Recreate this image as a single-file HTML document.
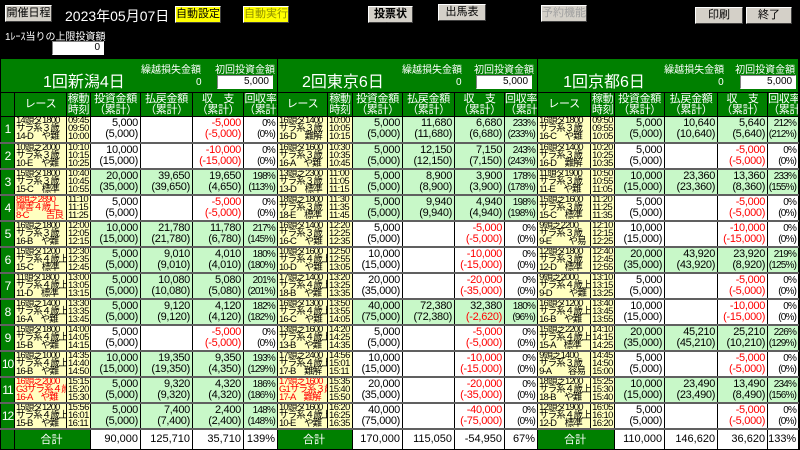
<!DOCTYPE html>
<html><head><meta charset="utf-8">
<style>
*{box-sizing:border-box;margin:0;padding:0}
body{width:800px;height:449px;background:#000;overflow:hidden;position:relative;font-family:"Liberation Sans","Noto Sans CJK JP",sans-serif;color:#000}
.btn{position:absolute;background:#d4d0c8;border:1px solid;border-color:#fff #404040 #404040 #fff;box-shadow:1px 1px 0 #000;font-size:11px;text-align:center;line-height:15px;height:17px}
.yb{background:#ffff00}
.dis{color:#a0a0a0}
.wt{position:absolute;color:#fff}
.inp{position:absolute;background:#fff;border:1px solid;border-color:#808080 #fff #fff #808080;font-size:10px;text-align:right;padding-right:3px;line-height:12px}
table{position:absolute;left:0;top:58px;border-collapse:collapse;table-layout:fixed;width:798px}
td{border:1px solid #000;padding:0;overflow:hidden;white-space:nowrap;vertical-align:middle}
tr.d td{border-bottom:2px solid #606060;height:26px}
.ch td{background:#008000;color:#fff;font-size:11px;text-align:center;line-height:11px;height:24px;border-color:#000;letter-spacing:-0.3px}
.num{background:#008000;color:#fff;text-align:center;font-size:12px;letter-spacing:-1px}
.r{background:#ffffc0;font-size:9.5px;line-height:8px;padding-left:1px;letter-spacing:-0.9px}
.t{background:#ffffc0;font-size:9.5px;line-height:8px;padding-left:1px;letter-spacing:-0.6px}
.n{background:#fff;font-size:11px;line-height:11px;text-align:right;padding-right:2px;letter-spacing:-0.3px}
tr.d td:nth-child(7),tr.d td:nth-child(13),tr.d td:nth-child(19){font-size:10px;letter-spacing:-0.8px}
.g{background:#c8f8c8}
.red{color:#ff0000}
.rr{color:#ff0000}
.tot td{height:21px;font-size:11px;text-align:right;background:#fff;padding-right:2px}
.tot td.gt{background:#008000;color:#fff;text-align:center}
.hd td{background:#008000;color:#fff;height:34px}
.sh{position:relative;height:33px}
.sh .ttl{position:absolute;top:9px;font-size:16px}
.sh .l1{position:absolute;top:2px;font-size:10px}
.sh .z{position:absolute;top:18px;font-size:10px}
.sh .box{position:absolute;top:16px;width:56px;height:14px;background:#fff;border:1px solid;border-color:#808080 #fff #fff #808080;color:#000;font-size:10px;text-align:right;padding-right:3px;line-height:12px}
</style></head><body>
<div class="btn" style="left:5px;top:5px;width:47px">開催日程</div>
<div class="wt" style="left:65px;top:6px;font-size:14px">2023年05月07日</div>
<div class="btn yb" style="left:175px;top:6px;width:46px">自動設定</div>
<div class="btn yb" style="left:243px;top:6px;width:46px;color:#909000">自動実行</div>
<div class="btn" style="left:368px;top:6px;width:45px;font-weight:bold">投票状況</div>
<div class="btn" style="left:438px;top:4px;width:48px">出馬表</div>
<div class="btn dis" style="left:541px;top:5px;width:46px">予約機能</div>
<div class="btn" style="left:695px;top:7px;width:48px">印刷</div>
<div class="btn" style="left:746px;top:7px;width:46px">終了</div>
<div class="wt" style="left:5px;top:28px;font-size:10px">1ﾚｰｽ当りの上限投資額</div>
<div class="inp" style="left:52px;top:41px;width:52px;height:14px">0</div>

<table>
<colgroup>
<col style="width:14px">
<col style="width:52px"><col style="width:24px"><col style="width:50px"><col style="width:52px"><col style="width:51px"><col style="width:34px">
<col style="width:50px"><col style="width:25px"><col style="width:50px"><col style="width:52px"><col style="width:50px"><col style="width:33px">
<col style="width:53px"><col style="width:24px"><col style="width:50px"><col style="width:53px"><col style="width:50px"><col style="width:31px">
</colgroup>
<tr class="hd">
<td colspan="7"><div class="sh"><span class="ttl" style="left:42px">1回新潟4日</span><span class="l1" style="left:140px">繰越損失金額</span><span class="l1" style="left:214px">初回投資金額</span><span class="z" style="left:195px">0</span><span class="box" style="left:216px">5,000</span></div></td>
<td colspan="6"><div class="sh"><span class="ttl" style="left:24px">2回東京6日</span><span class="l1" style="left:124px">繰越損失金額</span><span class="l1" style="left:196px">初回投資金額</span><span class="z" style="left:178px">0</span><span class="box" style="left:198px">5,000</span></div></td>
<td colspan="6"><div class="sh"><span class="ttl" style="left:25px">1回京都6日</span><span class="l1" style="left:126px">繰越損失金額</span><span class="l1" style="left:197px">初回投資金額</span><span class="z" style="left:180px">0</span><span class="box" style="left:202px">5,000</span></div></td>
</tr>
<tr class="ch">
<td></td><td>レース</td><td>稼動<br>時刻</td><td>投資金額<br>（累計）</td><td>払戻金額<br>（累計）</td><td>収　支<br>（累計）</td><td>回収率<br>（累計）</td>
<td>レース</td><td>稼動<br>時刻</td><td>投資金額<br>（累計）</td><td>払戻金額<br>（累計）</td><td>収　支<br>（累計）</td><td>回収率<br>（累計）</td>
<td>レース</td><td>稼動<br>時刻</td><td>投資金額<br>（累計）</td><td>払戻金額<br>（累計）</td><td>収　支<br>（累計）</td><td>回収率<br>（累計）</td>
</tr>

<tr class="d"><td class="num">1</td>
<td class="r">14頭ダ1800<br>サラ系３歳<br>14-D　や難</td><td class="t">09:45<br>09:50<br>10:00</td><td class="n">5,000<br>(5,000)</td><td class="n"></td><td class="n red">-5,000<br>(-5,000)</td><td class="n">0%<br>(0%)</td>
<td class="r">16頭ダ1400<br>サラ系３歳<br>16-D　難解</td><td class="t">10:00<br>10:05<br>10:15</td><td class="n g">5,000<br>(5,000)</td><td class="n g">11,680<br>(11,680)</td><td class="n g">6,680<br>(6,680)</td><td class="n g">233%<br>(233%)</td>
<td class="r">16頭ダ1800<br>サラ系３歳<br>16-C　や難</td><td class="t">09:50<br>09:55<br>10:05</td><td class="n g">5,000<br>(5,000)</td><td class="n g">10,640<br>(10,640)</td><td class="n g">5,640<br>(5,640)</td><td class="n g">212%<br>(212%)</td></tr>

<tr class="d"><td class="num">2</td>
<td class="r">10頭芝2000<br>サラ系３歳<br>10-E　や難</td><td class="t">10:10<br>10:15<br>10:25</td><td class="n">10,000<br>(15,000)</td><td class="n"></td><td class="n red">-10,000<br>(-15,000)</td><td class="n">0%<br>(0%)</td>
<td class="r">16頭ダ1600<br>サラ系３歳<br>16-A　や難</td><td class="t">10:30<br>10:35<br>10:45</td><td class="n g">5,000<br>(5,000)</td><td class="n g">12,150<br>(12,150)</td><td class="n g">7,150<br>(7,150)</td><td class="n g">243%<br>(243%)</td>
<td class="r">16頭ダ1400<br>サラ系３歳<br>16-D　難解</td><td class="t">10:20<br>10:25<br>10:35</td><td class="n">5,000<br>(5,000)</td><td class="n"></td><td class="n red">-5,000<br>(-5,000)</td><td class="n">0%<br>(0%)</td></tr>

<tr class="d"><td class="num">3</td>
<td class="r">15頭ダ1800<br>サラ系３歳<br>15-C　標準</td><td class="t">10:40<br>10:45<br>10:55</td><td class="n g">20,000<br>(35,000)</td><td class="n g">39,650<br>(39,650)</td><td class="n g">19,650<br>(4,650)</td><td class="n g">198%<br>(113%)</td>
<td class="r">13頭芝2300<br>サラ系３歳<br>13-D　標準</td><td class="t">11:00<br>11:05<br>11:15</td><td class="n g">5,000<br>(5,000)</td><td class="n g">8,900<br>(8,900)</td><td class="n g">3,900<br>(3,900)</td><td class="n g">178%<br>(178%)</td>
<td class="r">11頭ダ1900<br>サラ系３歳<br>11-E　や難</td><td class="t">10:50<br>10:55<br>11:05</td><td class="n g">10,000<br>(15,000)</td><td class="n g">23,360<br>(23,360)</td><td class="n g">13,360<br>(8,360)</td><td class="n g">233%<br>(155%)</td></tr>

<tr class="d"><td class="num">4</td>
<td class="r rr">8頭芝2890<br>障害４歳上<br>8-C　　吉良</td><td class="t">11:10<br>11:15<br>11:25</td><td class="n">5,000<br>(5,000)</td><td class="n"></td><td class="n red">-5,000<br>(-5,000)</td><td class="n">0%<br>(0%)</td>
<td class="r">18頭芝1800<br>サラ系３歳<br>18-E　標準</td><td class="t">11:30<br>11:35<br>11:45</td><td class="n g">5,000<br>(5,000)</td><td class="n g">9,940<br>(9,940)</td><td class="n g">4,940<br>(4,940)</td><td class="n g">198%<br>(198%)</td>
<td class="r">15頭芝1600<br>サラ系３歳<br>15-C　標準</td><td class="t">11:20<br>11:25<br>11:35</td><td class="n">5,000<br>(5,000)</td><td class="n"></td><td class="n red">-5,000<br>(-5,000)</td><td class="n">0%<br>(0%)</td></tr>

<tr class="d"><td class="num">5</td>
<td class="r">16頭芝1800<br>サラ系３歳<br>16-B　や難</td><td class="t">12:00<br>12:05<br>12:15</td><td class="n g">10,000<br>(15,000)</td><td class="n g">21,780<br>(21,780)</td><td class="n g">11,780<br>(6,780)</td><td class="n g">217%<br>(145%)</td>
<td class="r">16頭ダ1400<br>サラ系３歳<br>16-C　や難</td><td class="t">12:20<br>12:25<br>12:35</td><td class="n">5,000<br>(5,000)</td><td class="n"></td><td class="n red">-5,000<br>(-5,000)</td><td class="n">0%<br>(0%)</td>
<td class="r">9頭芝2200<br>サラ系３歳<br>9-E　　や易</td><td class="t">12:10<br>12:15<br>12:25</td><td class="n">10,000<br>(15,000)</td><td class="n"></td><td class="n red">-10,000<br>(-15,000)</td><td class="n">0%<br>(0%)</td></tr>

<tr class="d"><td class="num">6</td>
<td class="r">15頭ダ1200<br>サラ系４歳上<br>15-C　標準</td><td class="t">12:30<br>12:35<br>12:45</td><td class="n g">5,000<br>(5,000)</td><td class="n g">9,010<br>(9,010)</td><td class="n g">4,010<br>(4,010)</td><td class="n g">180%<br>(180%)</td>
<td class="r">10頭ダ1600<br>サラ系４歳上<br>10-D　や難</td><td class="t">12:50<br>12:55<br>13:05</td><td class="n">10,000<br>(15,000)</td><td class="n"></td><td class="n red">-10,000<br>(-15,000)</td><td class="n">0%<br>(0%)</td>
<td class="r">12頭ダ1800<br>サラ系３歳<br>12-D　標準</td><td class="t">12:40<br>12:45<br>12:55</td><td class="n g">20,000<br>(35,000)</td><td class="n g">43,920<br>(43,920)</td><td class="n g">23,920<br>(8,920)</td><td class="n g">219%<br>(125%)</td></tr>

<tr class="d"><td class="num">7</td>
<td class="r">11頭ダ1800<br>サラ系４歳上<br>11-D　標準</td><td class="t">13:00<br>13:05<br>13:15</td><td class="n g">5,000<br>(5,000)</td><td class="n g">10,080<br>(10,080)</td><td class="n g">5,080<br>(5,080)</td><td class="n g">201%<br>(201%)</td>
<td class="r">17頭芝1400<br>サラ系４歳上<br>18-B　や難</td><td class="t">13:20<br>13:25<br>13:35</td><td class="n">20,000<br>(35,000)</td><td class="n"></td><td class="n red">-20,000<br>(-35,000)</td><td class="n">0%<br>(0%)</td>
<td class="r">9頭芝2000<br>サラ系４歳上<br>9-D　　や難</td><td class="t">13:10<br>13:15<br>13:25</td><td class="n">5,000<br>(5,000)</td><td class="n"></td><td class="n red">-5,000<br>(-5,000)</td><td class="n">0%<br>(0%)</td></tr>

<tr class="d"><td class="num">8</td>
<td class="r">16頭芝1400<br>サラ系４歳上<br>16-A　や難</td><td class="t">13:30<br>13:35<br>13:45</td><td class="n g">5,000<br>(5,000)</td><td class="n g">9,120<br>(9,120)</td><td class="n g">4,120<br>(4,120)</td><td class="n g">182%<br>(182%)</td>
<td class="r">16頭ダ1300<br>サラ系４歳上<br>16-C　や難</td><td class="t">13:50<br>13:55<br>14:05</td><td class="n g">40,000<br>(75,000)</td><td class="n g">72,380<br>(72,380)</td><td class="n g">32,380<br><span class="red">(-2,620)</span></td><td class="n g">180%<br>(96%)</td>
<td class="r">16頭ダ1200<br>サラ系４歳上<br>16-B　や難</td><td class="t">13:40<br>13:45<br>13:55</td><td class="n">10,000<br>(15,000)</td><td class="n"></td><td class="n red">-10,000<br>(-15,000)</td><td class="n">0%<br>(0%)</td></tr>

<tr class="d"><td class="num">9</td>
<td class="r">15頭ダ1800<br>サラ系４歳上<br>15-B　や難</td><td class="t">14:00<br>14:05<br>14:15</td><td class="n">5,000<br>(5,000)</td><td class="n"></td><td class="n red">-5,000<br>(-5,000)</td><td class="n">0%<br>(0%)</td>
<td class="r">13頭芝1600<br>サラ系４歳上<br>13-B　や難</td><td class="t">14:20<br>14:25<br>14:35</td><td class="n">5,000<br>(5,000)</td><td class="n"></td><td class="n red">-5,000<br>(-5,000)</td><td class="n">0%<br>(0%)</td>
<td class="r">15頭芝2200<br>サラ系４歳上<br>15-A　標準</td><td class="t">14:10<br>14:15<br>14:25</td><td class="n g">20,000<br>(35,000)</td><td class="n g">45,210<br>(45,210)</td><td class="n g">25,210<br>(10,210)</td><td class="n g">226%<br>(129%)</td></tr>

<tr class="d"><td class="num">10</td>
<td class="r">16頭芝1000<br>サラ系４歳上<br>16-B　や難</td><td class="t">14:35<br>14:40<br>14:50</td><td class="n g">10,000<br>(15,000)</td><td class="n g">19,350<br>(19,350)</td><td class="n g">9,350<br>(4,350)</td><td class="n g">193%<br>(129%)</td>
<td class="r">17頭芝2400<br>サラ系４歳上<br>17-B　難解</td><td class="t">14:56<br>15:01<br>15:11</td><td class="n">10,000<br>(15,000)</td><td class="n"></td><td class="n red">-10,000<br>(-15,000)</td><td class="n">0%<br>(0%)</td>
<td class="r">9頭芝1400<br>サラ系３歳<br>9-A　　容易</td><td class="t">14:45<br>14:50<br>15:00</td><td class="n">5,000<br>(5,000)</td><td class="n"></td><td class="n red">-5,000<br>(-5,000)</td><td class="n">0%<br>(0%)</td></tr>

<tr class="d"><td class="num">11</td>
<td class="r rr">16頭芝2000<br>G3サラ系４歳上<br>16-A　や難</td><td class="t">15:15<br>15:20<br>15:30</td><td class="n g">5,000<br>(5,000)</td><td class="n g">9,320<br>(9,320)</td><td class="n g">4,320<br>(4,320)</td><td class="n g">186%<br>(186%)</td>
<td class="r rr">17頭芝1600<br>G1サラ系３歳<br>17-A　難解</td><td class="t">15:35<br>15:40<br>15:50</td><td class="n">20,000<br>(35,000)</td><td class="n"></td><td class="n red">-20,000<br>(-35,000)</td><td class="n">0%<br>(0%)</td>
<td class="r">18頭芝1200<br>サラ系４歳上<br>18-B　や難</td><td class="t">15:25<br>15:30<br>15:40</td><td class="n g">10,000<br>(15,000)</td><td class="n g">23,490<br>(23,490)</td><td class="n g">13,490<br>(8,490)</td><td class="n g">234%<br>(156%)</td></tr>

<tr class="d"><td class="num">12</td>
<td class="r">15頭ダ1200<br>サラ系４歳上<br>15-B　や難</td><td class="t">15:56<br>16:01<br>16:11</td><td class="n g">5,000<br>(5,000)</td><td class="n g">7,400<br>(7,400)</td><td class="n g">2,400<br>(2,400)</td><td class="n g">148%<br>(148%)</td>
<td class="r">10頭ダ1600<br>サラ系４歳上<br>10-E　や難</td><td class="t">16:20<br>16:25<br>16:35</td><td class="n">40,000<br>(75,000)</td><td class="n"></td><td class="n red">-40,000<br>(-75,000)</td><td class="n">0%<br>(0%)</td>
<td class="r">12頭ダ1900<br>サラ系４歳上<br>12-D　標準</td><td class="t">16:05<br>16:10<br>16:20</td><td class="n">5,000<br>(5,000)</td><td class="n"></td><td class="n red">-5,000<br>(-5,000)</td><td class="n">0%<br>(0%)</td></tr>

<tr class="tot">
<td class="gt"></td><td class="gt" colspan="2">合計</td><td>90,000</td><td>125,710</td><td>35,710</td><td>139%</td>
<td class="gt" colspan="2">合計</td><td>170,000</td><td>115,050</td><td>-54,950</td><td>67%</td>
<td class="gt" colspan="2">合計</td><td>110,000</td><td>146,620</td><td>36,620</td><td>133%</td>
</tr>
</table>
</body></html>
